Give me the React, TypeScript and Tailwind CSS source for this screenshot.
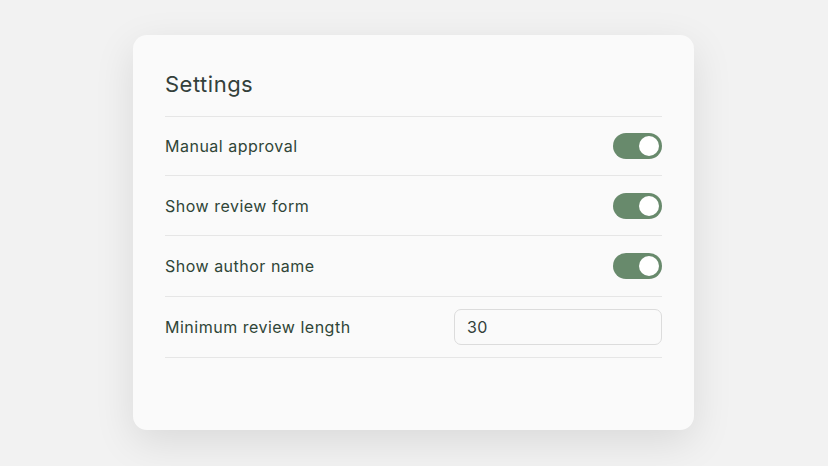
import React, { useState } from 'react';

function Toggle({ on, onChange }: { on: boolean; onChange: () => void }) {
  return (
    <button
      type="button"
      onClick={onChange}
      className={`relative h-[26px] w-[49px] rounded-full ${on ? 'bg-[#688a6c]' : 'bg-[#d4d4d4]'}`}
    >
      <span
        className={`absolute top-[3px] h-[20px] w-[20px] rounded-full bg-white ${on ? 'left-[26px]' : 'left-[3px]'}`}
      />
    </button>
  );
}

export default function App() {
  const [settings, setSettings] = useState({
    manual: true,
    form: true,
    author: true,
  });
  const [minLength, setMinLength] = useState('30');

  const rows: { key: keyof typeof settings; label: string; h: string }[] = [
    { key: 'manual', label: 'Manual approval', h: 'h-[59px]' },
    { key: 'form', label: 'Show review form', h: 'h-[60px]' },
    { key: 'author', label: 'Show author name', h: 'h-[61px]' },
  ];

  return (
    <div
      className="flex h-[466px] w-[828px] items-start bg-[#f2f2f2] pt-[35px] pl-[133px] text-[#2f4537]"
      style={{ fontFamily: 'Inter, "Open Sans", sans-serif' }}
    >
      <div className="h-[395px] w-[561px] rounded-[14px] bg-[#fafafa] px-8 pt-[35px] shadow-[0_12px_40px_rgba(0,0,0,0.10)]">
        <h2 className="mb-[18px] text-[22px] leading-7 font-normal tracking-[0.5px] text-[#33403a]">Settings</h2>
        <div className="border-t border-[#e6e6e6]">
          {rows.map((r) => (
            <div key={r.key} className={`flex ${r.h} items-center justify-between border-b border-[#e6e6e6]`}>
              <span className="text-[16px] tracking-[0.5px]">{r.label}</span>
              <Toggle
                on={settings[r.key]}
                onChange={() => setSettings({ ...settings, [r.key]: !settings[r.key] })}
              />
            </div>
          ))}
          <div className="flex h-[61px] items-center justify-between border-b border-[#e6e6e6]">
            <span className="text-[16px] tracking-[0.5px]">Minimum review length</span>
            <input
              value={minLength}
              onChange={(e) => setMinLength(e.target.value)}
              className="h-[36px] w-[208px] rounded-[7px] border border-[#dcdcdc] bg-[#fafafa] px-3 text-[16px] tracking-[0.4px] text-[#33403a] outline-none"
            />
          </div>
        </div>
      </div>
    </div>
  );
}
